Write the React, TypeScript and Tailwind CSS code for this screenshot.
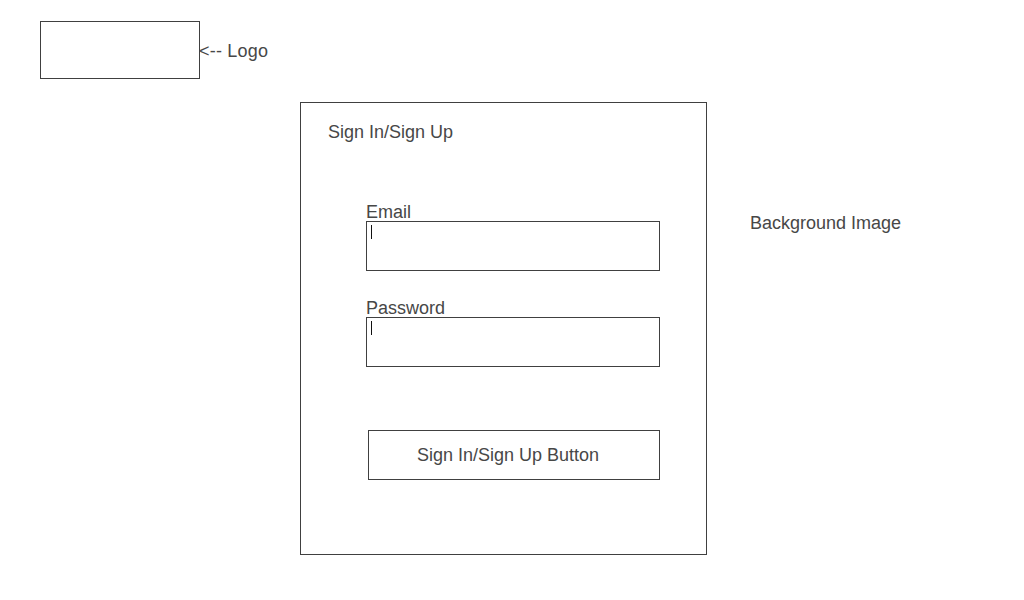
const FIELDS = [
  { label: "Email", gap: "mt-[57px]" },
  { label: "Password", gap: "mt-[25px]" },
]

export default function App() {
  return (
    <div className="w-[1024px] h-[600px] bg-white text-[#474747] text-[18px] leading-[21px] font-['Liberation_Sans',Arial,sans-serif]">
      <div className="flex items-center pl-[40px] pt-[21px]">
        <div className="w-[160px] h-[58px] border border-[#404040]" />
        <span className="-ml-px pt-[2px] tracking-[0.2px]">&lt;-- Logo</span>
      </div>

      <div className="flex items-start pl-[300px] mt-[23px]">
        <div className="w-[407px] h-[453px] border border-[#404040] pt-[19px]">
          <p className="pl-[27px]">Sign In/Sign Up</p>

          <div className="pl-[65px]">
            {FIELDS.map((f) => (
              <div key={f.label} className={f.gap}>
                <p className="leading-[17px] pt-[4px]">{f.label}</p>
                <div className="w-[294px] h-[50px] border border-[#404040] pl-[4px] pt-[3px]">
                  <div className="w-px h-[14px] bg-[#111]" />
                </div>
              </div>
            ))}

            <button className="mt-[63px] ml-[2px] w-[292px] h-[50px] border border-[#404040] pl-[48px] text-left">
              Sign In/Sign Up Button
            </button>
          </div>
        </div>

        <p className="ml-[43px] mt-[111px]">Background Image</p>
      </div>
    </div>
  )
}
